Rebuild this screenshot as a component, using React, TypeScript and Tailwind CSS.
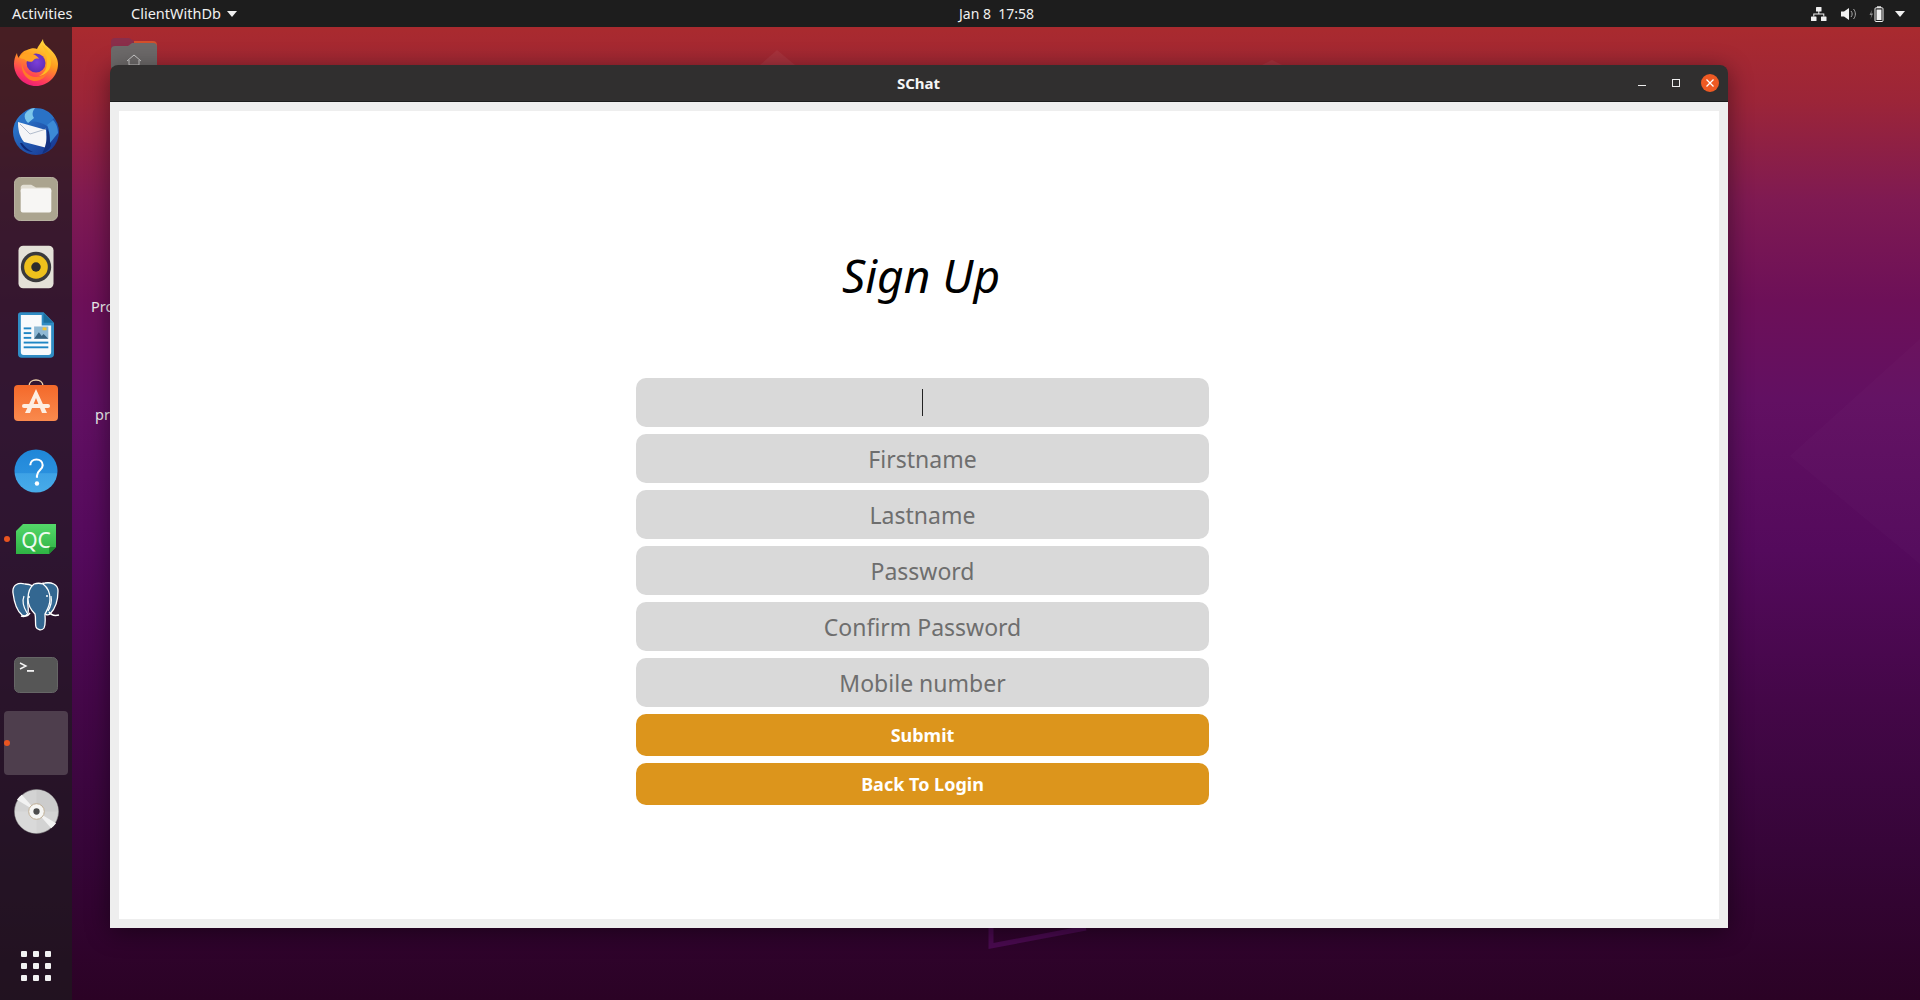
import React from "react";

const Firefox = () => (
  <svg width="46" height="47" viewBox="0 0 46 47" className="-mt-[2px]">
    <defs>
      <linearGradient id="ffa" x1="0.7" y1="0" x2="0.3" y2="1">
        <stop offset="0" stopColor="#ffdf3f" />
        <stop offset="0.45" stopColor="#ff9a1f" />
        <stop offset="0.8" stopColor="#ff3a5c" />
        <stop offset="1" stopColor="#ea1a7c" />
      </linearGradient>
      <radialGradient id="ffb" cx="0.55" cy="0.45" r="0.6">
        <stop offset="0" stopColor="#7b3fd9" />
        <stop offset="1" stopColor="#5b2bb0" />
      </radialGradient>
    </defs>
    <path d="M30 0c0 5 4 7 8 11 6 6 7 11 7 14 0 12-10 22-22 22S1 37 1 25c0-4 1-8 3-11 0 2 1 4 2 5 1-4 4-7 8-8 4-2 8-2 10-1 1-3 4-6 6-10z" fill="url(#ffa)" />
    <circle cx="23" cy="24" r="9.500" fill="url(#ffb)" />
    <path d="M6 18c3-3 9-5 14-3 3 1 5 3 6 5-3-1-5 0-6 2-3 2-7 0-9-2-2 0-4-1-5-2z" fill="#ffa423" />
    <path d="M29 6c5 3 9 10 9 17 0 8-5 13-12 14 6-3 8-8 8-14 0-6-2-12-5-17z" fill="#ffbe22" />
    <path d="M9 22c0 9 6 16 14 16 6 0 10-3 13-7-3 7-8 11-14 11C14 42 7 33 9 22z" fill="#ff7a28" />
  </svg>
);

const Thunderbird = () => (
  <svg width="48" height="48" viewBox="0 0 48 48">
    <defs>
      <linearGradient id="tba" x1="0" y1="0" x2="1" y2="1">
        <stop offset="0" stopColor="#2f86d8" />
        <stop offset="1" stopColor="#152f8c" />
      </linearGradient>
    </defs>
    <circle cx="24" cy="25" r="23" fill="url(#tba)" />
    <path d="M7 13C10 5 16 1 23 1c8 0 15 3 19 10l-7 8c-8-5-16-6-24-2z" fill="#2a72c6" />
    <path d="M13 7c2-3 6-6 10-6-3 4-3 7-1 10l-6 5c-3-3-4-6-3-9z" fill="#7cc6ea" />
    <path d="M6 15 34 23 35 41 12 35C7 29 6 22 6 15z" fill="#f5f5f7" />
    <path d="M8 17 18 27 34 22" fill="none" stroke="#a9b4c6" strokeWidth="0.900" />
    <path d="M35 22c3 4 5 10 4 17-2 4-5 6-9 8 3-5 6-16 5-25z" fill="#12307f" />
    <path d="M41 13c4 4 5 9 5 13l-8 10c0-7-1-14-3-18z" fill="#3c8ad6" />
    <path d="M10 36c3 4 6 7 11 9-6 0-11-4-13-9z" fill="#0f2a78" />
  </svg>
);

const Files = () => (
  <svg width="44" height="44" viewBox="0 0 46 46">
    <rect x="0.500" y="0.500" width="45" height="45" rx="6" fill="#aba48f" stroke="#bdb7a6" />
    <path d="M7 11c0-1.500 1-3 3-3h8l5 3h13c2 0 3 1 3 3v2H7z" fill="#e3dfd4" />
    <rect x="7" y="12" width="32" height="25" rx="2" fill="#f7f6f4" />
  </svg>
);

const Rhythmbox = () => (
  <svg width="36" height="44" viewBox="0 0 38 46">
    <rect x="0.500" y="0.500" width="37" height="45" rx="5" fill="#e4e1d8" />
    <circle cx="19" cy="23" r="16" fill="#3a3a3c" />
    <circle cx="19" cy="23" r="12.500" fill="#eec11c" />
    <circle cx="19" cy="23" r="5" fill="#2d2d2d" />
  </svg>
);

const Writer = () => (
  <svg width="36" height="48" viewBox="0 0 38 48">
    <path d="M3 0h24l11 11v33a4 4 0 0 1-4 4H4a4 4 0 0 1-4-4V3a3 3 0 0 1 3-3z" fill="#2f8cc4" />
    <path d="M3 3h22v11h10v28a3 3 0 0 1-3 3H6a3 3 0 0 1-3-3z" fill="#f7fafc" />
    <path d="M27 1l10 10H27z" fill="#1b6f9e" />
    <rect x="6" y="16" width="8" height="2" fill="#1f86c4" />
    <rect x="6" y="21" width="8" height="2" fill="#1f86c4" />
    <rect x="6" y="26" width="8" height="2" fill="#1f86c4" />
    <rect x="6" y="31" width="26" height="2" fill="#1f86c4" />
    <rect x="6" y="36" width="26" height="2" fill="#1f86c4" />
    <rect x="17" y="15" width="15" height="13" fill="#8fb9d4" />
    <path d="M17 28l5-7 3 4 2-2 5 5z" fill="#36617f" />
    <rect x="26" y="16" width="4" height="3" fill="#f4c430" />
  </svg>
);

const Software = () => (
  <svg width="44" height="42" viewBox="0 0 44 42" className="-mt-[6px]">
    <defs>
      <linearGradient id="swa" x1="0" y1="0" x2="0" y2="1">
        <stop offset="0" stopColor="#f4692a" />
        <stop offset="1" stopColor="#f98a4e" />
      </linearGradient>
    </defs>
    <path d="M15 7c0-8 14-8 14 0" fill="none" stroke="#eccfa8" strokeWidth="1.500" />
    <rect x="0" y="6" width="44" height="36" rx="4" fill="url(#swa)" />
    <path d="M22 10 11 34h5l6-15 6 15h5z" fill="#fdeee2" />
    <rect x="8" y="25" width="28" height="4" rx="2" fill="#fdeee2" />
  </svg>
);

const Help = () => (
  <svg width="44" height="44" viewBox="0 0 46 46">
    <defs>
      <linearGradient id="hpa" x1="0" y1="0" x2="0" y2="1">
        <stop offset="0" stopColor="#1f86d8" />
        <stop offset="0.55" stopColor="#2a90de" />
        <stop offset="0.56" stopColor="#3ea2e6" />
        <stop offset="1" stopColor="#48ace9" />
      </linearGradient>
    </defs>
    <circle cx="23" cy="23" r="22.500" fill="url(#hpa)" />
    <path d="M17 17c0-4 3-6 6.500-6s6.500 2 6.500 6c0 5-6 5-6 11v2" fill="none" stroke="#fff" strokeWidth="2.200" />
    <circle cx="24" cy="36" r="2.300" fill="#fff" />
  </svg>
);

const QtCreator = () => (
  <svg width="40" height="30" viewBox="0 0 40 30">
    <defs>
      <linearGradient id="qca" x1="0" y1="0" x2="0" y2="1">
        <stop offset="0" stopColor="#54d86a" />
        <stop offset="1" stopColor="#2fb344" />
      </linearGradient>
    </defs>
    <path d="M7 0h33v23l-7 7H0V7z" fill="url(#qca)" />
    <path d="M40 23l-7 7v-7z" fill="#1f8e33" />
    <text x="20" y="24" textAnchor="middle" fill="#eefbf0" fontSize="21" fontFamily="'Noto Sans', sans-serif">QC</text>
  </svg>
);

const Postgres = () => (
  <svg width="48" height="50" viewBox="0 0 48 50">
    <g fill="#336791" stroke="#fff" strokeWidth="1.300" strokeLinejoin="round">
      <path d="M13 2C6 0 0 3 1 11c1 8 4 18 9 22 3 2 5 0 6-2 1-5-1-9 0-14 1-6 2-10 5-13-2-1-5-2-8-2z" />
      <path d="M33 1c6-1 13 1 13 8 0 9-3 18-8 23-3 2-6 0-6-3-1-6 1-10 0-15 0-5-2-8-4-11 1-1 3-2 5-2z" />
      <path d="M22 2c-4 3-6 9-6 15 0 7 3 11 7 15 1 4 0 10 1 13 1 3 6 4 8 1 2-4 1-10 1-14 2-4 5-8 5-15 0-7-3-12-7-15-3-1-6-1-9 0z" />
    </g>
    <path d="M12 14c-2 5 0 12 3 17M39 14c1 5 0 10-3 15" fill="none" stroke="#fff" strokeWidth="1.200" />
    <path d="M9 34c3 1 7 0 9-3M37 30c2 3 6 4 10 3" fill="none" stroke="#fff" strokeWidth="1.500" />
    <circle cx="17" cy="15" r="1" fill="#fff" />
    <circle cx="35" cy="14" r="1" fill="#fff" />
  </svg>
);

const Terminal = () => (
  <svg width="44" height="36" viewBox="0 0 44 36">
    <rect x="0.500" y="0.500" width="43" height="35" rx="5" fill="#565656" stroke="#666" />
    <path d="M6 6l6 3-6 3" fill="none" stroke="#f2f2f2" strokeWidth="1.400" />
    <rect x="13" y="13" width="7" height="1.800" fill="#f2f2f2" />
  </svg>
);

const Disc = () => (
  <svg width="45" height="45" viewBox="0 0 46 46">
    <circle cx="23" cy="23" r="22.500" fill="#d3d3d3" stroke="#8c8c8c" strokeWidth="0.600" />
    <path d="M23 23 23 1A22 22 0 0 1 45 23z" fill="#cccccc" />
    <path d="M23 23 3 11A22 22 0 0 1 8 6z" fill="#f2f2f2" />
    <path d="M23 23 43 35A22 22 0 0 1 38 40z" fill="#f2f2f2" />
    <path d="M23 23 1 23A22 22 0 0 0 23 45z" fill="#d9d9d9" />
    <circle cx="23" cy="23" r="8" fill="#f6f6f4" stroke="#bfae94" />
    <circle cx="23" cy="23" r="3.200" fill="#4d4d4d" />
  </svg>
);

const AppGrid = () => (
  <svg width="30" height="30" viewBox="0 0 30 30" fill="#f2f2f2">
    {[0, 12, 24].map((y) =>
      [0, 12, 24].map((x) => <rect key={`${x}-${y}`} x={x} y={y} width="6" height="6" rx="1" />)
    )}
  </svg>
);

const dockItems = [
  { el: <Firefox /> },
  { el: <Thunderbird /> },
  { el: <Files /> },
  { el: <Rhythmbox /> },
  { el: <Writer /> },
  { el: <Software /> },
  { el: <Help /> },
  { el: <QtCreator />, dot: true },
  { el: <Postgres /> },
  { el: <Terminal /> },
];

const Dot = () => <span className="absolute left-[4px] top-1/2 -mt-[3px] h-[6px] w-[6px] rounded-full bg-[#e95420]" />;

const Dock = () => (
  <aside className="flex w-[72px] shrink-0 flex-col items-center bg-[rgba(30,25,30,0.7)] pt-[2px]">
    {dockItems.map((d, i) => (
      <div key={i} className="relative flex h-[68px] w-full items-center justify-center">
        {d.dot && <Dot />}
        {d.el}
      </div>
    ))}
    <div className="relative flex h-[68px] w-full items-center justify-center">
      <div className="h-[64px] w-[64px] rounded bg-[#4e3e4d]" />
      <Dot />
    </div>
    <div className="flex h-[68px] w-full items-center justify-center">
      <Disc />
    </div>
    <div className="mt-auto flex h-[49px] items-start justify-center pb-[19px]">
      <AppGrid />
    </div>
  </aside>
);

const TopBar = () => (
  <header className="relative z-20 flex h-[27px] shrink-0 items-center bg-[#1d1d1d] text-[14.500px] text-[#f0f0f0]">
    <span className="ml-[12px] w-[119px]">Activities</span>
    <span>ClientWithDb</span>
    <svg className="ml-[6px]" width="10" height="6" viewBox="0 0 10 6">
      <path d="M0 0h10L5 6z" fill="#f0f0f0" />
    </svg>
    <span className="ml-[722px] w-[100px] text-[14px] whitespace-pre">{"Jan 8  17:58"}</span>
    <div className="ml-auto flex items-center">
      <svg width="16" height="14" viewBox="0 0 16 14" fill="#f0f0f0">
        <rect x="5" y="0" width="5.500" height="4.500" rx="0.600" />
        <rect x="0" y="9.500" width="5.500" height="4.500" rx="0.600" />
        <rect x="10" y="9.500" width="5.500" height="4.500" rx="0.600" />
        <path d="M7.300 4h1v2.500h5v3h-1v-2h-9v2h-1v-3h5z" />
      </svg>
      <svg className="ml-[14px]" width="16" height="14" viewBox="0 0 16 14">
        <path d="M0 4.500h3L8 1v12L3 9.500H0z" fill="#f0f0f0" />
        <path d="M10 4c1.500 1.500 1.500 4.500 0 6M12.500 2c2.500 3 2.500 7 0 10" fill="none" stroke="#a9a9a9" strokeWidth="1" />
      </svg>
      <svg className="ml-[12px]" width="15" height="16" viewBox="0 0 15 16">
        <path d="M3 4 0.500 9h2L1.500 13 4 7.500H2.200z" fill="#8f8f8f" />
        <rect x="6" y="1.800" width="8" height="13.700" rx="1" fill="none" stroke="#f0f0f0" />
        <rect x="8" y="0.300" width="4" height="1.500" fill="#f0f0f0" />
        <rect x="7.500" y="3.500" width="5" height="10.500" fill="#f0f0f0" />
      </svg>
      <svg className="mr-[15px] ml-[11px]" width="10" height="6" viewBox="0 0 10 6">
        <path d="M0 0h10L5 6z" fill="#f0f0f0" />
      </svg>
    </div>
  </header>
);

const placeholders = ["Firstname", "Lastname", "Password", "Confirm Password", "Mobile number"];

const Form = () => (
  <div className="flex w-[573px] flex-col gap-[7px]">
    <div className="flex h-[49px] items-center justify-center rounded-[10px] bg-[#d9d9d9]">
      <span className="h-[27px] w-px bg-[#222]" />
    </div>
    {placeholders.map((p) => (
      <input
        key={p}
        readOnly
        placeholder={p}
        className="h-[49px] rounded-[10px] bg-[#d9d9d9] text-center text-[23px] outline-none placeholder:text-[#6e6e6e]"
      />
    ))}
    {["Submit", "Back To Login"].map((b) => (
      <button key={b} className="h-[42px] rounded-[10px] bg-[#dc951c] text-[18px] font-bold text-white">
        {b}
      </button>
    ))}
  </div>
);

const SChatWindow = () => (
  <section className="relative z-10 mt-[38px] ml-[38px] h-[863px] w-[1618px] shrink-0 rounded-t-[8px] shadow-[0_4px_24px_rgba(0,0,0,0.45)]">
    <div className="relative flex h-[37px] items-center justify-center rounded-t-[8px] border-b border-[#1b1b1b] bg-[#302f2f] text-[15px] font-bold text-[#f5f5f5]">
      <span className="-ml-[1px]">SChat</span>
      <div className="absolute top-0 right-0 flex h-[36px] items-center">
        <span className="mt-[4px] h-px w-[8px] bg-[#eee]" />
        <span className="ml-[26px] h-[8px] w-[8px] border border-[#eee]" />
        <span className="mr-[9px] ml-[21px] flex h-[18px] w-[18px] items-center justify-center rounded-full bg-[#ef5a23]">
          <svg width="8" height="8" viewBox="0 0 8 8">
            <path d="M0.500 0.500l7 7M7.500 0.500l-7 7" stroke="#fff" strokeWidth="1.300" />
          </svg>
        </span>
      </div>
    </div>
    <div className="h-[826px] bg-[#eeeeee] px-[9px] pt-[9px] pb-[9px]">
      <div className="h-[808px] bg-white pt-[132px] pl-[517px]">
        <h1 className="mb-[70px] h-[65px] w-[570px] text-center text-[46px] leading-[65px] font-normal text-black italic">
          Sign Up
        </h1>
        <Form />
      </div>
    </div>
  </section>
);

const Wallpaper = () => (
  <svg className="absolute inset-0" width="1920" height="1000" viewBox="0 0 1920 1000">
    <polygon points="1920,339 1790,456 1920,564" fill="#fff" fillOpacity="0.015" />
    <polygon points="777,50 760,65 795,65" fill="#fff" fillOpacity="0.05" />
    <polygon points="1272,60 1262,65 1282,65" fill="#fff" fillOpacity="0.05" />
    <polyline points="991,928 991,946 1086,928" fill="none" stroke="#4a0a50" strokeWidth="5" />
  </svg>
);

const DesktopIcons = () => (
  <>
    <svg className="absolute top-[36px] left-[111px]" width="46" height="32" viewBox="0 0 46 32">
      <path d="M0 6a4 4 0 0 1 4-4h14l5 3h19a4 4 0 0 1 4 4v23H0z" fill="#8a2e4a" />
      <path d="M23 5h19a4 4 0 0 1 4 4v3H23z" fill="#d2502c" />
      <path d="M0 14a4 4 0 0 1 4-4h13l4-3h21a4 4 0 0 1 4 4v21H0z" fill="#6d6a6a" />
      <path d="M16 25l7-6 7 6M18 24v5h10v-5" fill="none" stroke="#d8d8d8" strokeWidth="0.900" />
    </svg>
    <span className="absolute top-[296px] left-[91px] text-[14.500px] text-[#f2f2f2]">Pro</span>
    <span className="absolute top-[404px] left-[95px] text-[14.500px] text-[#f2f2f2]">pr</span>
  </>
);

export default function App() {
  return (
    <div className="relative flex h-[1000px] w-[1920px] flex-col overflow-hidden bg-[linear-gradient(180deg,#a92a2f_3%,#9c2538_10%,#7f1a52_20%,#6d1058_30%,#621062_40%,#540a5c_55%,#440748_70%,#360538_85%,#2b0225_100%)] font-['Noto_Sans','Open_Sans',sans-serif]">
      <Wallpaper />
      <DesktopIcons />
      <TopBar />
      <main className="relative flex min-h-0 flex-1">
        <Dock />
        <SChatWindow />
      </main>
    </div>
  );
}
